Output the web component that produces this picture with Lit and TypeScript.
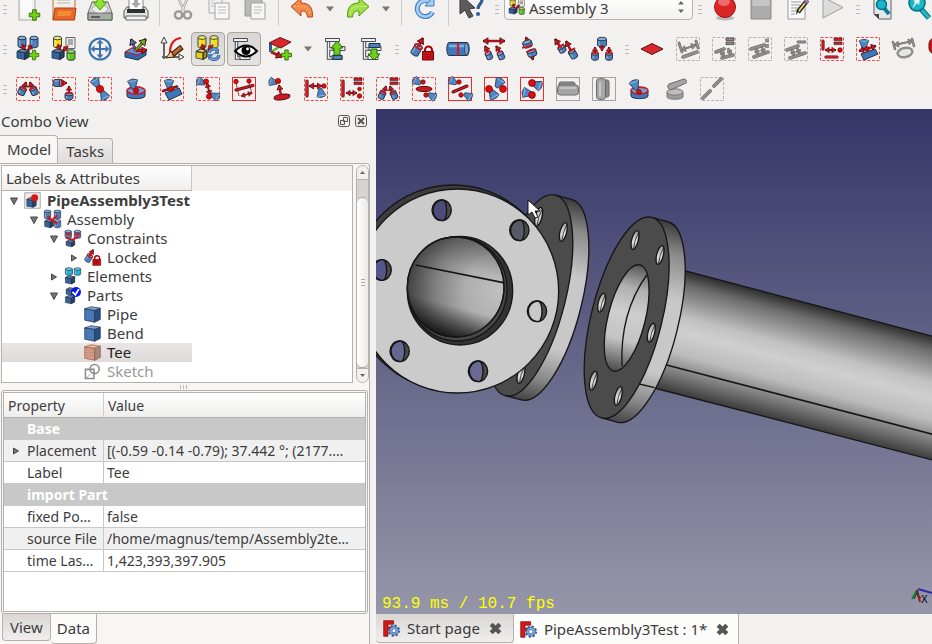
import { LitElement, html, svg, css, nothing } from "lit";
import { customElement, property, state } from "lit/decorators.js";
import { classMap } from "lit/directives/class-map.js";

const INK = "#27313f";
const RED = "#d01820";
const BLUE = "#4a80c0";
const GRAY = "#8e8e8e";

/* ---------- drawing parts shared by the icons (24 x 24 grid) ---------- */

const cyl = (x: number, y: number, r = 0, w = 8, h = 8, fill = BLUE, rim = INK) => svg`
  <g transform="translate(${x} ${y}) rotate(${r})" stroke=${rim} stroke-width=".9">
    <path d="M${-w / 2} ${-h / 2}V${h / 2}A${w / 2} 1.8 0 0 0 ${w / 2} ${h / 2}V${-h / 2}Z" fill=${fill}/>
    <path d="M${-w / 2 + 1.6} ${-h / 2 + 2}V${h / 2 + 0.5}" stroke="#fff" stroke-opacity=".3" stroke-width="1.4"/>
    <ellipse cy=${-h / 2} rx=${w / 2} ry="1.8" fill=${fill}/>
    <ellipse cy=${-h / 2} rx=${w / 2 - 0.6} ry="1.2" fill="#fff" fill-opacity=".35" stroke="none"/>
  </g>`;

const cone = (x: number, y: number, r = 0, s = 1) => svg`
  <g transform="translate(${x} ${y}) rotate(${r}) scale(${s})" stroke="#26374d" stroke-width=".8">
    <path d="M-5-3.500Q0-6.500 5-3.500L1.600 5H-1.600Z" fill="#4f86c4"/>
    <path d="M-4.400-3.500Q0-1.800 4.400-3.500" fill="none" stroke="#9cc0e8"/>
  </g>`;

const box = (x: number, y: number, w = 9, h = 8, fill = "#34639f") => svg`
  <g transform="translate(${x} ${y})" stroke=${INK} stroke-width=".8" stroke-linejoin="round">
    <path d="M0 2.5L${w * 0.65} 3.5V${h + 1.5}L0 ${h}Z" fill=${fill}/>
    <path d="M${w * 0.65} 3.5L${w} 1.5V${h - 1}L${w * 0.65} ${h + 1.5}Z" fill=${fill}/>
    <path d="M${w * 0.65} 3.5L${w} 1.5V${h - 1}L${w * 0.65} ${h + 1.5}Z" fill="#000" fill-opacity=".3"/>
    <path d="M0 2.5L${w * 0.4} 0L${w} 1.5L${w * 0.65} 3.5Z" fill=${fill}/>
    <path d="M0 2.5L${w * 0.4} 0L${w} 1.5L${w * 0.65} 3.5Z" fill="#fff" fill-opacity=".25"/>
  </g>`;

const dot = (x: number, y: number, r = 2.8, fill = "#e00c0c") =>
  svg`<circle cx=${x} cy=${y} r=${r} fill=${fill} stroke="#7c0a0a" stroke-width=".8"/>`;

const bar = (a: number, b: number, c: number, d: number, fill = RED, w = 2.4) => svg`
  <path d="M${a} ${b}L${c} ${d}" stroke=${fill === GRAY ? "#6d6d6d" : "#4d0b0e"} stroke-width=${w + 1.2} stroke-linecap="round"/>
  <path d="M${a} ${b}L${c} ${d}" stroke=${fill} stroke-width=${w} stroke-linecap="round"/>`;

const head = (x: number, y: number, ang: number, fill: string, s: number) =>
  svg`<path transform="translate(${x} ${y}) rotate(${ang}) scale(${s})" d="M0 0L-4.6-3V3Z" fill=${fill}
    stroke=${fill === GRAY ? "#6d6d6d" : "#4d0b0e"} stroke-width=".7"/>`;

const arrow = (a: number, b: number, c: number, d: number, both = false, fill = RED, s = 1) => {
  const t = (Math.atan2(d - b, c - a) * 180) / Math.PI;
  return svg`
    <path d="M${a} ${b}L${c} ${d}" stroke=${fill === GRAY ? "#6d6d6d" : "#6d0b0e"} stroke-width=${2.2 * s}/>
    <path d="M${a} ${b}L${c} ${d}" stroke=${fill} stroke-width=${1.2 * s}/>
    ${head(c, d, t, fill, s)}${both ? head(a, b, t + 180, fill, s) : nothing}`;
};

const frame = (color = "#f04a4a", dash = true) => svg`
  <rect x=".5" y=".5" width="23" height="23" fill="none" stroke=${color} stroke-dasharray=${dash ? "3 1.6" : "none"}/>`;

const equal = (x: number, y: number, fill = RED) => svg`
  <path d="M${x} ${y}h8v2.6h-8zM${x} ${y + 4}h8v2.6h-8z" fill=${fill} stroke="#40282a" stroke-width=".7"/>`;

const plus = (x: number, y: number, s = 1) => svg`
  <path transform="translate(${x} ${y}) scale(${s})" d="M-1.7-5h3.4v3.3H5v3.4H1.7V5h-3.4V1.7H-5v-3.4h3.3z"
    fill="#73d216" stroke="#2f6b06" stroke-width=".9"/>`;

const treeGlyph = svg`
  <g fill="#f2f2f2" stroke="#454b50">
    <path d="M4.500 5v16h5M4.500 12h5" stroke-width="3.400" fill="none"/><path d="M4.500 4v17h5M4.500 12h5" stroke="#f2f2f2" stroke-width="1.400" fill="none"/>
    <path d="M1.500 1.500h14v3h-14z"/><path d="M9 9.500h12v4H9zM8 18.500h10v4H8z"/>
  </g>`;

const icons: Record<string, unknown> = {
  newDoc: svg`<path d="M3 0h16v23H3z" fill="#f1f1f0" stroke="#a9a9a7"/><path d="M5 2h11v16H5z" fill="#fafafa"/>${plus(18.500, 18, 1.050)}`,
  open: svg`<path d="M1 23V0h9l2 2h11v8" fill="#f2efea" stroke="#b2703c"/><path d="M5 3h13M5 6h13" stroke="#b5b5b0"/>
    <path d="M3 11h21l-1.500 12H1z" fill="#e8672c" stroke="#b23a10"/><path d="M6 14h14l-2 5H5z" fill="#f0a432" fill-opacity=".65"/>`,
  save: svg`<path d="M4 5h16l4 11v7H0v-7z" fill="#d6d7d5" stroke="#6a6c69"/><path d="M0 16h24v7H0z" fill="#a9aba8" stroke="#5a5c59"/>
    <ellipse cx="12" cy="12" rx="8" ry="4" fill="#eceded" stroke="#aaa"/><path d="M3 20h9" stroke="#444" stroke-width="1.500"/><path d="M17 20h4" stroke="#6d6"/>
    <path d="M9-2h6v7h4l-7 8-7-8h4z" fill="#8ae234" stroke="#4e9a06"/>`,
  print: svg`<path d="M5 0h14v13H5z" fill="#fff" stroke="#888"/><path d="M10 3h4v3h3l-5 5-5-5h3z" fill="#aaa"/>
    <path d="M3 10h2v4h14v-4h2l3 4v7H0v-7z" fill="#e2e2e0" stroke="#555"/><path d="M3 12h18v4H3z" fill="#2e3436"/><path d="M2 19h20v4H2z" fill="#f5f5f5" stroke="#666"/>`,
  cut: svg`<path d="M6-2l7 16M18-2l-7 16" stroke="#a9a9a9" stroke-width="2.600"/><path d="M6-2l7 16M18-2l-7 16" stroke="#e6e6e6"/>
    <circle cx="7.500" cy="18" r="3.600" fill="none" stroke="#999" stroke-width="2.400"/><circle cx="16.500" cy="18" r="3.600" fill="none" stroke="#999" stroke-width="2.400"/>`,
  copy: svg`<path d="M2-2h13v18H2z" fill="#f2f2f2" stroke="#adadad"/><path d="M8 6h14v16H8z" fill="#f7f7f7" stroke="#a2a2a2"/>
    <path d="M11 10h8M11 13h8M11 16h8M4 3h4M4 6h3M4 9h3" stroke="#b9b9b9"/>`,
  paste: svg`<path d="M2-2h17v21H2z" fill="#b9b9b7" stroke="#999"/><path d="M8 6h14v16H8z" fill="#f6f6f6" stroke="#a2a2a2"/>
    <path d="M11 10h8M11 13h8M11 16h6" stroke="#b9b9b9"/>`,
  undo: svg`<path d="M1 9.500L11 1v5c8 0 12 4 11.500 14h-5c-.5-5-2.500-6-6.500-6v5z" fill="#f08a4b" stroke="#c4401c" stroke-linejoin="round"/>
    <path d="M4 9.500h8c5 0 7.500 3 8 8" fill="none" stroke="#fbc26a" stroke-dasharray="2 1.500"/>`,
  redo: svg`<path d="M23 9.500L13 1v5C5 6 1 10 1.500 20h5c.5-5 2.500-6 6.500-6v5z" fill="#9fe04a" stroke="#4e9a06" stroke-linejoin="round"/>
    <path d="M20 9.500h-8c-5 0-7.500 3-8 8" fill="none" stroke="#e2f56a" stroke-dasharray="2 1.500"/>`,
  refresh: svg`<path d="M19.500 15a8 8 0 1 1-1.500-9" fill="none" stroke="#3f7cc0" stroke-width="5"/>
    <path d="M19.500 15a8 8 0 1 1-1.500-9" fill="none" stroke="#a5cdf2" stroke-width="2.800"/>
    <path d="M21-1v10h-9z" fill="#a5cdf2" stroke="#3f7cc0"/>`,
  whats: svg`<path d="M0-3v20l5-4 4 8 4-2-4-7 6-1z" fill="#5c5c5c" stroke="#333"/><path d="M14 2c1-4 8-4 8 1 0 4-4 4-4 9" fill="none" stroke="#2d5d96" stroke-width="3.200"/>
    <circle cx="18" cy="17" r="2" fill="#2d5d96"/>`,
  record: svg`<ellipse cx="12" cy="21" rx="9" ry="2.500" fill="#b9b9b7"/><circle cx="12" cy="10" r="10.500" fill="#dc2626" stroke="#9c1010"/><ellipse cx="11" cy="5" rx="6" ry="4" fill="#f48a8a" fill-opacity=".7"/>`,
  stop: svg`<path d="M2 0h20v22H2z" fill="#ababab" stroke="#8b8b8b"/><path d="M3.500 0h17v9h-17z" fill="#c6c6c6"/>`,
  macro: svg`<path d="M3 0h17v22H3z" fill="#fafafa" stroke="#999"/><path d="M6 5h10M6 8h9M6 11h8M6 14h5M6 17h4" stroke="#999"/>
    <path d="M22.500 3L13 15" stroke="#222" stroke-width="4.500"/><path d="M20 6L13.500 14.500" stroke="#f0d060" stroke-width="2"/><path d="M22.500 3l-2 2.500" stroke="#a878b0" stroke-width="4"/><path d="M14 14l-3 4 1-6z" fill="#222"/>`,
  play: svg`<path d="M2 0V21L22 10.500Z" fill="#dcdcdc" stroke="#9d9d9d"/>`,
  fit: svg`<path d="M3 0h17v22H8l-5-5z" fill="#e6e8e8" stroke="#5b5f60"/><path d="M3 17h5v5z" fill="#444"/><path d="M13 11l5 6" stroke="#087f95" stroke-width="4"/>
    <circle cx="10.500" cy="7.500" r="5" fill="#19b6c8" stroke="#067184" stroke-width="1.500"/>`,
  zoom: svg`<path d="M14 12l8 9" stroke="#067184" stroke-width="5.500"/><path d="M14 12l8 9" stroke="#22bccc" stroke-width="3"/>
    <circle cx="10" cy="6" r="8" fill="#19b6c8" stroke="#067184" stroke-width="1.600"/><path d="M5 12l3-7-2-1 7-3-1 7-2-2z" fill="#f0f0f0"/>`,

  asmAdd: svg`${cyl(6, 5)}${cyl(18, 5)}${box(1, 12, 12, 9)}${arrow(6, 7, 9, 13, false, RED, 0.900)}${arrow(16, 8, 12, 13, false, RED, 0.900)}${plus(18, 18, 0.950)}`,
  asmPart: svg`${cyl(5.500, 5, 0, 8, 8, "#f0dc20")}<path d="M14 .5h9v11h-9z" fill="#ededed" stroke="#666"/><path d="M16 3h5M16 5h5M16 7h5" stroke="#666"/>
    ${box(0, 12, 12, 9)}${arrow(6, 7, 8, 13, false, RED, 0.900)}${arrow(16, 9, 11, 14, false, RED, 0.900)}${cyl(19, 18, 0, 8, 7, "#60c818")}`,
  move: svg`<circle cx="12" cy="12" r="10.500" fill="none" stroke="#3e72ae" stroke-width="2.200"/>
    <path d="M12 4v16M4 12h16" stroke="#3e72ae" stroke-width="2"/><path d="M12 2.500l3.500 4h-7zM12 21.500l3.500-4h-7zM2.500 12l4-3.500v7zM21.500 12l-4-3.500v7z" fill="#3e72ae"/>`,
  axes: svg`<path d="M1 15l7-4 14 2v5l-8 5L1 20z" fill="#2f68ac" stroke=${INK}/><path d="M1 15l13 3 8-5-14-2z" fill="#5c93d4" stroke="#d01018"/>
    ${arrow(12, 14, 7, 2, false, "#3a78c0", 1.200)}${arrow(11, 14, 22, 2, false, "#58c020", 1.300)}${arrow(12, 14, 23, 13, false, RED, 1.100)}`,
  sketch: svg`<path d="M4 22V3M2 20h20" stroke="#666" stroke-width="2"/><path d="M4 0l3 6H1zM24 20l-5 3v-6z" fill="#eee" stroke="#444"/>
    <path d="M10 16C10 8 13 2 21 1" fill="none" stroke="#e01818" stroke-width="2.200"/><path d="M22 10L12 18" stroke="#402408" stroke-width="5.500"/><path d="M21 10.500l-8 6.500" stroke="#b86830" stroke-width="3"/><path d="M11 14l-5 7 8-1z" fill="#e8c890" stroke="#402408"/>`,
  asmLink: svg`${cyl(6, 5, 0, 8, 9, "#f0dc20")}${cyl(18, 5, 0, 8, 9, "#f0dc20")}${box(0, 12, 11, 9, "#e8d018")}${arrow(6, 7, 8, 13, false, RED, 0.900)}${arrow(17, 8, 12, 13, false, RED, 0.900)}
    <path d="M13 16c1-5 7-5 8-2M23 18c-1 6-8 5-9 2" fill="none" stroke="#2a5c9c" stroke-width="3.200"/><path d="M13 16c1-5 7-5 8-2M23 18c-1 6-8 5-9 2" fill="none" stroke="#86b2e6" stroke-width="1.200"/>
    <path d="M23 11v6h-6zM12 23v-6h6z" fill="#4a80c0"/>`,
  eye: svg`${treeGlyph}<path d="M3 14Q14 3 25 14Q14 25 3 14Z" fill="#fff" stroke="#000" stroke-width="2"/><circle cx="14" cy="13.500" r="4.500" fill="#000"/><circle cx="15.500" cy="12" r="1.400" fill="#fff"/>`,
  plane: svg`<path d="M2.500 6v9" stroke="#2c5a96" stroke-width="3"/><path d="M3 15l8-5" stroke="#58c020" stroke-width="2.400"/>${arrow(3, 15, 14, 20, false, RED, 1.200)}
    <path d="M1 6l11-5.500 11 4.500-10 6z" fill="#d8262c" stroke="#6a1414"/>${plus(18.500, 18)}`,
  up: svg`${treeGlyph}<path d="M9 18.500h9v4H9z" fill="#4a80c0" stroke="#234"/><path d="M13 4l6 7h-3v7h-6v-7H7z" fill="#6cd01c" stroke="#27620a"/>`,
  down: svg`${treeGlyph}<path d="M9 6.500h11v4H9z" fill="#4a80c0" stroke="#234"/><path d="M14 23l6-6h-3v-5h-6v5H8z" fill="#6cd01c" stroke="#27620a"/>`,
  lock: svg`${cyl(6.500, 13, 30, 8, 8)}${arrow(8, 10, 13, 1, false, RED, 1.200)}<ellipse cx="8.500" cy="9.500" rx="4" ry="2" transform="rotate(30 8.500 9.500)" fill="none" stroke=${RED} stroke-width="1.400"/>
    <path d="M15 16v-3a3.500 3.500 0 0 1 7 0v3" fill="none" stroke="#a00" stroke-width="2"/><path d="M12.500 14.500h11v8.500h-11z" fill="#cf1018" stroke="#6c0508"/><path d="M15 17.500h6M15 20h6" stroke="#8a0a0e"/>`,
  coin: svg`<path d="M3 5.500h18a2 6 0 0 1 0 13H3a2 6 0 0 1 0-13z" fill="#3f78ba" stroke=${INK}/><path d="M3 9h18" stroke="#7fb0e6" stroke-width="2.500"/><path d="M12 6v12.500" stroke="#e01818" stroke-width="2.200"/><ellipse cx="20.500" cy="12" rx="2" ry="6" fill="#6ea3de" stroke=${INK} stroke-width=".7"/>`,
  axial: svg`${arrow(1, 4, 23, 4, true, RED, 1.100)}${cyl(7, 18.500, -24, 6, 5)}${cyl(19, 18.500, -24, 6, 5)}${arrow(6, 15, 3, 9)}${arrow(18, 15, 14, 9)}
    <path d="M3 16l5-2M15 16l5-2" stroke=${RED} stroke-width="1.600"/>`,
  coax: svg`${arrow(10, 6, 8, 0)}${arrow(13, 16, 15, 23)}${cyl(9.500, 7, -18, 9, 4)}${cyl(14, 16, -18, 9, 4)}<path d="M4 11l10-3M8 15l10-3" stroke=${RED} stroke-width="1.600"/>`,
  parallel: svg`${cyl(8, 12, -30, 7, 4)}${cyl(19, 17, -30, 7, 6)}${arrow(7, 11, 1, 2, false, RED, 1.100)}${arrow(17, 14, 12, 4, false, RED, 1.100)}<path d="M4 11l6-4M15 15l6-4" stroke=${RED} stroke-width="1.600"/>`,
  multi: svg`${cyl(12, 5, 0, 9, 6)}${arrow(12, 8, 12, 14, false, RED, 0.900)}${cyl(5, 19, 0, 7, 5)}${cyl(19, 19, 0, 7, 5)}${arrow(5, 16, 5, 10, false, RED, 0.900)}${arrow(19, 16, 19, 10, false, RED, 0.900)}<path d="M1 16.500h8M15 16.500h8" stroke=${RED} stroke-width="1.600"/>`,
  diamond: svg`<path d="M1 12l11-5.500 11 5.500-11 5.500z" fill="#d8262c" stroke="#5a1010"/>`,
  gDist: svg`${frame("#b3b3b3")}${arrow(5, 13, 20, 8, true, GRAY)}${bar(3, 6, 6, 15, GRAY, 1.600)}${bar(20, 4, 22, 11, GRAY, 1.600)}${bar(7, 20, 21, 15, GRAY)}`,
  gEq1: svg`${frame("#b3b3b3")}${equal(14, 1, GRAY)}${bar(4, 15, 12, 12, GRAY)}${bar(10, 21, 21, 18, GRAY)}${arrow(9, 13, 12, 20, true, GRAY, 0.800)}${arrow(16, 11, 19, 18, true, GRAY, 0.800)}`,
  gEq2: svg`${frame("#b3b3b3")}<path d="M17 1.500h4v4h-4zM17 7h4v4h-4z" fill=${GRAY}/>${bar(3, 12, 16, 8, GRAY)}${bar(6, 20, 20, 15, GRAY)}${arrow(8, 11, 10, 18, true, GRAY, 0.800)}${arrow(14, 10, 16, 16, true, GRAY, 0.800)}`,
  gEq3: svg`${frame("#b3b3b3")}${bar(14, 5, 21, 5, GRAY, 1.600)}${bar(3, 13, 14, 9, GRAY)}${bar(6, 21, 21, 16, GRAY)}${arrow(8, 12, 10, 19, true, GRAY, 0.800)}${arrow(13, 11, 16, 17, true, GRAY, 0.800)}`,
  rEq: svg`${frame()}${bar(3, 4, 3, 12, RED, 1.800)}${equal(14, 1)}${arrow(5, 13, 16, 13, true, RED, 0.900)}${dot(20, 13, 2.200)}${bar(6, 20, 17, 20, RED, 2)}`,
  planeCone: svg`${frame()}<path d="M5 17l14-5 3 5-14 6z" fill="#3f78ba" stroke=${INK}/>${cone(8, 7, 0, 0.950)}${arrow(3, 14, 20, 9, true, RED, 1)}${dot(11, 12, 2.400)}`,
  gRing: svg`${arrow(2, 8, 21, 4, true, GRAY)}${bar(1, 5, 3, 12, GRAY, 1.400)}${bar(20, 2, 22, 9, GRAY, 1.400)}<ellipse cx="13" cy="15.500" rx="7.500" ry="4.600" transform="rotate(-12 13 15.500)" fill="#e4e4e4" stroke="#8e8e8e" stroke-width="2.400"/>`,
  last: svg`<rect x="1" y="1" width="14" height="16" rx="6" fill="#d01018" stroke="#5a1010"/><path d="M5 6h6v7H5z" fill="#f4b8b8"/>`,

  c1: svg`${frame()}${cyl(6, 14, 25, 7, 5)}${cyl(18, 14, -25, 7, 5)}${arrow(8, 12, 10, 5, false, RED, 1)}${arrow(16, 12, 14, 5, false, RED, 1)}<path d="M4 10l7 3M20 10l-7 3" stroke=${RED} stroke-width="1.500"/>`,
  c2: svg`${frame()}${cyl(6, 6, 90, 7, 6)}${arrow(9, 6, 15, 6, false, RED, 0.900)}${cyl(17, 19, 0, 8, 4)}${arrow(17, 16, 17, 9, false, RED, 0.900)}<path d="M13 16.500h8M9.500 2v8" stroke=${RED} stroke-width="1.500"/>`,
  c3: svg`${frame()}${cone(8, 6, -28, 0.950)}${cone(16, 18, 152, 0.950)}${dot(12, 12, 3.600)}`,
  c4: svg`<path d="M3 14v5c0 3.500 18 3.500 18 0v-5" fill="#3f78ba" stroke=${INK}/><ellipse cx="12" cy="13.500" rx="9" ry="3.600" fill="#6ea3de" stroke=${RED} stroke-width="1.600"/>${cone(9, 7, -8, 1)}${dot(12, 13.500, 2.600)}`,
  c5: svg`${frame()}<path d="M5 16l14-5 3 6-13 6z" fill="#3f78ba" stroke=${INK}/>${cone(9, 7, 0, 0.950)}${bar(3, 14, 17, 9.500, RED, 1.200)}${dot(11, 12, 2.400)}`,
  c6: svg`${frame()}${cone(5, 5, -65, 0.850)}${cone(19, 19, 115, 0.850)}${arrow(11, 6, 14, 18, true, RED, 0.900)}${dot(10, 4.500, 2.600)}${dot(13, 19.500, 2.600)}`,
  c7: svg`${frame("#f02a2a", false)}<path d="M4 6l3 13M17 6l3 11" stroke="#b33"/>${dot(4, 4.500, 2.200)}${dot(17, 4, 2.200)}${bar(4, 13, 21, 8.500, RED, 1.800)}${arrow(9, 19, 20, 16, true, RED, 0.800)}`,
  c8: svg`${cone(5, 5, -78, 0.850)}<ellipse cx="14" cy="20" rx="8" ry="2.800" fill=${RED} stroke="#4d0b0e" transform="rotate(-8 14 20)"/>${arrow(13, 18, 11, 8, false, RED, 1)}${dot(10, 4, 2.600)}`,
  c9: svg`${frame()}${bar(3, 4, 3, 19, RED, 2)}${cone(17, 16, 170, 0.900)}${arrow(5, 9, 18, 9, true, RED, 1)}${dot(20, 9, 2.200)}`,
  c10: svg`${frame()}${bar(3, 4, 3, 19, RED, 2)}${equal(14, 1)}${arrow(6, 16, 17, 16, true, RED, 0.900)}${dot(19.500, 12, 1.800)}${dot(19.500, 19, 2.200)}`,
  c11: svg`${frame()}${equal(14, 1)}${cyl(6, 18, 25, 6, 5)}${cyl(18, 18, -25, 6, 5)}${arrow(8, 16, 10, 9, false, RED, 0.900)}${arrow(16, 16, 14, 9, false, RED, 0.900)}<path d="M4 14l6 3M20 14l-6 3" stroke=${RED} stroke-width="1.400"/>`,
  c12: svg`${frame()}${cone(5, 4.500, -60, 0.850)}${cone(20, 19, 120, 0.850)}<ellipse cx="12" cy="12" rx="8" ry="2.600" fill=${RED} stroke="#4d0b0e"/>${dot(11, 5, 2.200)}${dot(14, 18, 2.200)}`,
  c13: svg`${frame("#f02a2a", false)}${cone(5, 4.500, -60, 0.850)}${cone(20, 19, 120, 0.850)}${bar(5, 15, 19, 9, RED, 1.800)}${dot(11, 5, 2.200)}${dot(13, 18, 2.200)}`,
  c14: svg`${frame("#f02a2a", false)}${cone(15, 6, 30)}${cone(9, 17, 150)}${dot(5, 12, 3.400)}${dot(19, 12, 3.400)}`,
  c15: svg`${frame("#f02a2a", false)}${cone(17, 8, 110)}${cone(7, 16, -80)}${dot(12, 6, 3.400)}${dot(12, 18, 3.400)}`,
  c16: svg`${frame("#a3a3a3", false)}<rect x="3" y="5" width="16" height="10" rx="2" fill="#8a8a8a" stroke="#6a6a6a"/><rect x="1.500" y="8" width="21" height="10" rx="3" fill="#a6a6a6" stroke="#6a6a6a"/><path d="M4 11h16" stroke="#c4c4c4" stroke-width="2"/>`,
  c17: svg`${frame("#a3a3a3", false)}<rect x="9" y="3" width="8" height="17" rx="2" fill="#8a8a8a" stroke="#6a6a6a"/><rect x="4.500" y="1.500" width="9" height="21" rx="3" fill="#a6a6a6" stroke="#6a6a6a"/><path d="M8 5v14" stroke="#c8c8c8" stroke-width="2"/>`,
  c18: svg`<path d="M3 14v5c0 3.500 17 3.500 17 0v-5" fill="#3f78ba" stroke=${INK}/><ellipse cx="11.500" cy="13.500" rx="8.500" ry="3.400" fill="#6ea3de" stroke=${RED} stroke-width="1.600"/>${cone(7, 8, -20, 1)}${dot(11, 15, 2.400)}`,
  c19: svg`<path d="M3 15v5c0 3 16 3 16 0v-5" fill="#9b9b9b" stroke="#7a7a7a"/><ellipse cx="11" cy="15" rx="8" ry="3.200" fill="#bdbdbd" stroke="#7a7a7a"/><path d="M5 7l15-5a2.500 2.500 0 0 1 2 4L9 12a3 3 0 0 1-4-5z" fill="#a4a4a4" stroke="#6a6a6a"/>`,
  c20: svg`${frame("#b3b3b3")}${bar(3, 21, 10, 14, GRAY, 2.600)}${bar(14, 9, 21, 2, GRAY, 2.600)}`,

  freecad: svg`<path d="M1 1h14v5H7v4h6v4H7v9H1z" fill="#d81818" stroke="#7a0808"/>
    <circle cx="15.500" cy="15" r="7.400" fill="none" stroke="#2f5c98" stroke-width="2.400" stroke-dasharray="3 2.810"/>
    <circle cx="15.500" cy="15" r="4.500" fill="none" stroke="#2f5c98" stroke-width="4.600"/><circle cx="15.500" cy="15" r="4.500" fill="none" stroke="#7ba3d8" stroke-width="2.800"/><circle cx="15.500" cy="15" r="2" fill="#fff"/>`,
  tDoc: svg`<path d="M1 1h22v22H1z" fill="#ececec" stroke="#8c8c8c"/>${box(4, 8, 13, 12)}<circle cx="15" cy="8" r="5" fill="#d81818"/>`,
  tAsm: svg`${cyl(5, 5, 0, 9, 9)}${cyl(19, 5, 0, 9, 9)}${box(1, 12, 12, 10)}${cyl(19, 18, 0, 9, 8)}<path d="M5 7l6 6 8-7M12 12l6 6" stroke=${RED} stroke-width="3" fill="none"/>`,
  tCon: svg`${cyl(6, 6, 0, 9, 8)}${cyl(19, 6, 0, 9, 8)}<path d="M2 6h8M15 6h8M3 11l9 3 8-5" stroke=${RED} stroke-width="3" fill="none"/>${box(3, 14, 12, 8)}`,
  tEle: svg`${cyl(7, 5, 0, 10, 7, "#28b0d8")}${cyl(19, 5, 0, 9, 7, "#28b0d8")}${box(2, 11, 13, 10)}`,
  tParts: svg`${box(3, 1, 12, 9)}${box(2, 12, 13, 10)}<circle cx="17" cy="7" r="7" fill="#0a18e8"/><path d="M12 7l4 4 5-8" fill="none" stroke="#fff" stroke-width="2.500"/>`,
  tBox: svg`<path d="M1 4l14 2v17L1 20z" fill="#4579b8" stroke=${INK}/><path d="M15 6l8-3v16l-8 4z" fill="#274f86" stroke=${INK}/><path d="M1 4l9-3 13 2-8 3z" fill="#7aa8de" stroke=${INK}/>`,
  tTee: svg`<path d="M1 4l14 2v17L1 20z" fill="#d99a82" stroke="#a05a48"/><path d="M15 6l8-3v16l-8 4z" fill="#a8887c" stroke="#7d5a50"/><path d="M1 4l9-3 13 2-8 3z" fill="#eab49c" stroke="#a05a48"/><path d="M3 8h11M3 12h11M3 16h11" stroke="#8c8c98" stroke-dasharray="2 2"/>`,
  tSketch: svg`<path d="M2 9h12v13H2z" fill="none" stroke="#8c8c8c" stroke-width="2.200"/><circle cx="15" cy="8.500" r="6.500" fill="none" stroke="#8c8c8c" stroke-width="2.200"/><path d="M2 22l7-6" stroke="#8c8c8c"/>`,
};

const icon = (name: string, size = 24) =>
  html`<svg class="ico" width=${size} height=${size} viewBox="0 0 24 24" fill="none" aria-hidden="true">${icons[name]}</svg>`;

const iconCss = css`
  .ico { display: block; flex: none; overflow: visible; }
  button { font: inherit; color: inherit; background: none; border: 0; padding: 0; margin: 0; }
`;

/* ---------- toolbars ---------- */

const rows: string[][] = [
  ["#", "newDoc", "open", "save", "print", "|", "cut", "copy", "paste", "|", "undo", "v", "redo", "v", "|", "refresh", "|", "whats",
    "##", "select", "##", "record", "stop", "macro", "play", "##", "fit", "zoom"],
  ["#", "asmAdd", "asmPart", "move", "axes", "sketch", "*asmLink", "*eye", "plane", "v", "up", "down", "##", "lock", "coin", "axial",
    "coax", "parallel", "multi", "##", "diamond", "gDist", "gEq1", "gEq2", "gEq3", "rEq", "planeCone", "gRing", "last"],
  ["#", ...Array.from({ length: 20 }, (_, i) => `c${i + 1}`)],
];

@customElement("tool-bars")
export class ToolBars extends LitElement {
  static styles = [iconCss, css`
    :host { display: block; overflow: hidden; background: #f2f1f0; }
    .row { display: flex; align-items: center; height: 40px; overflow: hidden; }
    .row.first { height: 29px; align-items: flex-end; padding-bottom: 3px; box-sizing: border-box; }
    .tool { width: 34px; height: 34px; margin: 0 1px; flex: none; display: grid; place-items: center; box-sizing: border-box; border: 1px solid transparent; border-radius: 4px; }
    .tool.on { border-color: #aaa49d; background: linear-gradient(#d8d5d2, #e6e4e2); }
    .grip { width: 14px; height: 34px; flex: none; display: grid; place-items: center; }
    .grip.lead { width: 10px; }
    .grip::before { content: ""; width: 4px; height: 9px; background: repeating-linear-gradient(#bdbab6 0 1px, transparent 1px 4px); }
    .sep { width: 1px; height: 34px; margin: 0 5px; flex: none; background: #cfccc8; }
    .more { width: 20px; height: 34px; flex: none; display: grid; place-items: center; }
    .more svg { display: block; }
    .combo { display: flex; align-items: center; gap: 4px; width: 189px; height: 26px; box-sizing: border-box; margin-bottom: 6px; padding: 0 8px 0 4px; flex: none; border: 1px solid #b5b1ac; border-radius: 4px; background: linear-gradient(#fff, #f3f2f1); }
    select { flex: 1; min-width: 0; height: 24px; appearance: none; border: 0; padding: 2px 0 0; background: none; color: #3c3c3c; font: 15px/20px "Noto Sans", sans-serif; }
  `];

  private item(k: string) {
    if (k === "#") return html`<span class="grip lead"></span>`;
    if (k === "##") return html`<span class="grip"></span>`;
    if (k === "|") return html`<span class="sep"></span>`;
    if (k === "v") return html`<button class="more" aria-label="More"><svg width="8" height="6" viewBox="0 0 8 6"><path d="M0 .5H8L4 5.500Z" fill="#777"/></svg></button>`;
    if (k === "select") return html`<label class="combo">${icon("asmPart", 16)}
      <select aria-label="Workbench"><option>Assembly 3</option></select>
      <svg width="6" height="12" viewBox="0 0 6 12" aria-hidden="true"><path d="M0 3.500L3 0l3 3.500zM0 8.500L3 12l3-3.500z" fill="#666"/></svg></label>`;
    const on = k.startsWith("*");
    const name = on ? k.slice(1) : k;
    return html`<button class=${classMap({ tool: true, on })} aria-label=${name}>${icon(name)}</button>`;
  }

  render() {
    return rows.map((r, i) => html`<div class=${classMap({ row: true, first: i === 0 })}>${r.map((k) => this.item(k))}</div>`);
  }
}

/* ---------- model tree and properties ---------- */

interface Node { level: number; label: string; icon: string; open?: boolean; leaf?: boolean; kind?: string }

const nodes: Node[] = [
  { level: 0, label: "PipeAssembly3Test", icon: "tDoc", open: true, kind: "bold" },
  { level: 1, label: "Assembly", icon: "tAsm", open: true },
  { level: 2, label: "Constraints", icon: "tCon", open: true },
  { level: 3, label: "Locked", icon: "lock" },
  { level: 2, label: "Elements", icon: "tEle" },
  { level: 2, label: "Parts", icon: "tParts", open: true },
  { level: 3, label: "Pipe", icon: "tBox", leaf: true },
  { level: 3, label: "Bend", icon: "tBox", leaf: true },
  { level: 3, label: "Tee", icon: "tTee", leaf: true },
  { level: 3, label: "Sketch", icon: "tSketch", leaf: true, kind: "dim" },
];

const props: { group?: string; name?: string; value?: string; expand?: boolean; alt?: boolean }[] = [
  { group: "Base" },
  { name: "Placement", value: "[(-0.59 -0.14 -0.79); 37.442 °; (2177.…", expand: true, alt: true },
  { name: "Label", value: "Tee" },
  { group: "import Part" },
  { name: "fixed Po…", value: "false" },
  { name: "source File", value: "/home/magnus/temp/Assembly2te…", alt: true },
  { name: "time Las…", value: "1,423,393,397.905" },
];

const triangle = (open?: boolean) => html`<svg class="tri" width="8" height="8" viewBox="0 0 8 8" aria-hidden="true">
  <path d=${open ? "M.5 1H7.500L4 7.500Z" : "M1.500 1V7L6.500 4Z"} fill="#777" stroke="#444"/></svg>`;

@customElement("combo-view")
export class ComboView extends LitElement {
  @property({ attribute: false }) items: Node[] = nodes;
  @state() private picked = "Tee";

  static styles = [iconCss, css`
    :host { display: flex; flex-direction: column; min-height: 0; color: #3c3c3c; background: #f2f1f0; font: 15px/19px "Noto Sans", sans-serif; }
    .title { display: flex; align-items: center; gap: 5px; height: 26px; box-sizing: border-box; padding: 0 9px 2px 1px; flex: none; }
    .title span { flex: 1; }
    .title svg { display: block; }
    .tabs { display: flex; align-items: flex-end; height: 28px; flex: none; }
    .tab { height: 25px; padding: 0 8px; border: 1px solid #b5b1ac; border-bottom: 0; border-left: 0; border-radius: 0 4px 0 0; background: linear-gradient(#f0efee, #dedbd8); }
    .tab.on { height: 28px; padding: 0 6px 0 7px; background: #f8f7f6; }
    .pane { display: flex; flex-direction: column; flex: 1; min-height: 0; margin-right: 6px; border: 1px solid #b5b1ac; border-left: 0; border-bottom: 0; border-radius: 0 4px 0 0; background: #f7f6f5; }
    .upper { display: flex; gap: 3px; flex: none; height: 219px; padding: 1px 0 0 1px; box-sizing: border-box; }
    .tree { flex: 1; border: 1px solid #b5b1ac; background: #fff; overflow: hidden; }
    .heads { display: flex; height: 25px; background: #f2f1f0; }
    .head { width: 190px; box-sizing: border-box; padding: 3px 4px; border-right: 1px solid #c9c6c2; border-bottom: 1px solid #b5b1ac; background: linear-gradient(#fff, #f0efee); }
    ul { list-style: none; margin: 0; padding: 0; width: 190px; }
    li { display: flex; align-items: center; height: 19px; gap: 6px; white-space: nowrap; box-sizing: border-box; }
    .l0 { padding-left: 8px; } .l1 { padding-left: 28px; } .l2 { padding-left: 48px; } .l3 { padding-left: 68px; }
    .tri { display: block; flex: none; }
    .blank { width: 8px; flex: none; }
    .bold { font-weight: 700; }
    .dim { color: #989898; }
    .selected { background: linear-gradient(#e8e6e5, #dedbd9); color: #222; }
    .scroll { display: flex; flex-direction: column; width: 13px; flex: none; box-sizing: border-box; border: 1px solid #b5b1ac; border-radius: 7px; background: #d6d3d0; overflow: hidden; }
    .cap { display: grid; place-items: center; height: 13px; flex: none; background: #f2f1f0; border: 0 solid #b5b1ac; border-bottom-width: 1px; }
    .cap.end { border-width: 1px 0 0; }
    .gap { height: 17px; flex: none; }
    .thumb { flex: 1; display: grid; place-items: center; border: 0 solid #aaa6a1; border-width: 1px 0; border-radius: 6px; background: linear-gradient(90deg, #fff, #eceae8); }
    .thumb::before { content: ""; width: 4px; height: 7px; background: repeating-linear-gradient(#aaa 0 1px, transparent 1px 3px); }
    .split { height: 7px; flex: none; display: grid; place-items: center; }
    .split::before { content: ""; width: 9px; height: 4px; background: repeating-linear-gradient(90deg, #bbb 0 1px, transparent 1px 3px); }
    .props { flex: 1; min-height: 0; margin: 0 1px; padding: 1px; border: 1px solid #b5b1ac; border-radius: 3px; }
    .sheet { height: 100%; box-sizing: border-box; border: 1px solid #b5b1ac; background: #fff; overflow: hidden; }
    table { width: 100%; border-collapse: separate; border-spacing: 0; table-layout: fixed; font-size: 14px; }
    th, td { padding: 0; font-weight: 400; text-align: left; white-space: nowrap; overflow: hidden; box-sizing: border-box; }
    thead th { height: 25px; padding-left: 4px; border-bottom: 1px solid #b5b1ac; background: linear-gradient(#fff, #efeeed); }
    .c1 { width: 99px; }
    thead th + th { border-left: 1px solid #d0cdca; }
    tbody td, tbody th { height: 22px; border-bottom: 1px solid #c8c8c8; }
    tbody th.group { padding-left: 23px; background: #c8c8c8; color: #fff; font-weight: 700; }
    .name { display: flex; align-items: center; gap: 7px; padding-left: 8px; }
    td { padding-left: 3px; border-left: 1px solid #c8c8c8; }
    .alt { background: #f0f0f0; }
    .foot { display: flex; align-items: flex-start; height: 30px; padding-left: 2px; flex: none; }
    .ftab { height: 27px; padding: 0 7px; border: 1px solid #b5b1ac; border-top: 0; border-radius: 0 0 4px 4px; background: linear-gradient(#d9d6d3, #f0efee); }
    .ftab.on { height: 30px; padding: 0 6px; background: #fbfbfa; border-left: 0; }
    .body { display: flex; flex-direction: column; flex: 1; min-height: 0; }
  `];

  render() {
    return html`
      <div class="title"><span>Combo View</span>
        <svg width="12" height="12" viewBox="0 0 12 12" fill="none" stroke="#555"><rect x=".5" y=".5" width="11" height="11" rx="2"/><path d="M5.500 2.500h4v4h-4zM2.500 5.500h4v4h-4z"/></svg>
        <svg width="12" height="12" viewBox="0 0 12 12" fill="none" stroke="#555"><rect x=".5" y=".5" width="11" height="11" rx="2"/><path d="M3 3l6 6M9 3l-6 6" stroke-width="2"/></svg>
      </div>
      <div class="tabs" role="tablist"><button class="tab on" role="tab">Model</button><button class="tab" role="tab">Tasks</button></div>
      <div class="pane">
        <div class="upper">
          <div class="tree">
            <div class="heads"><div class="head">Labels &amp; Attributes</div></div>
            <ul role="tree">
              ${this.items.map((n) => html`<li role="treeitem" @click=${() => (this.picked = n.label)}
                class=${classMap({ [`l${n.level}`]: true, bold: n.kind === "bold", dim: n.kind === "dim", selected: n.label === this.picked })}>
                ${n.leaf ? html`<span class="blank"></span>` : triangle(n.open)}${icon(n.icon, 17)}<span>${n.label}</span></li>`)}
            </ul>
          </div>
          <div class="scroll" aria-hidden="true">
            <span class="cap"><svg width="5" height="3" viewBox="0 0 5 3"><path d="M0 3L2.500 0 5 3z" fill="#666"/></svg></span>
            <span class="gap"></span><span class="thumb"></span>
            <span class="cap end"><svg width="5" height="3" viewBox="0 0 5 3"><path d="M0 0L2.500 3 5 0z" fill="#666"/></svg></span>
          </div>
        </div>
        <div class="split"></div>
        <div class="body">
          <div class="props"><div class="sheet"><table>
            <thead><tr><th class="c1">Property</th><th>Value</th></tr></thead>
            <tbody>${props.map((p) => p.group
              ? html`<tr><th class="group" colspan="2">${p.group}</th></tr>`
              : html`<tr class=${p.alt ? "alt" : ""}><th><div class="name">${p.expand ? triangle() : html`<span class="blank"></span>`}<span>${p.name}</span></div></th><td>${p.value}</td></tr>`)}
            </tbody></table></div></div>
          <div class="foot" role="tablist"><button class="ftab" role="tab">View</button><button class="ftab on" role="tab">Data</button></div>
        </div>
      </div>`;
  }
}

/* ---------- 3D view ---------- */

const tiltedFlange = (x: number, y: number) => svg`
  <g transform="translate(${x} ${y}) rotate(14)">
    <path d="M0-310L50-309A106 310 0 0 1 50 311L0 310Z" fill="url(#rim)"/>
    <ellipse rx="106" ry="310" fill="#4b4b4b"/>
  </g>`;

const slot = (x: number, y: number) => svg`
  <g transform="translate(${x} ${y}) rotate(14)">
    <ellipse rx="10" ry="29" fill="url(#slot)"/>
    <path d="M5-24Q-2 0 2 26" fill="none" stroke-width="2"/>
  </g>`;

const bolt = (x: number, y: number, fill: string) => svg`
  <ellipse cx=${x} cy=${y} rx="29" ry="31" fill="#4a4a4a"/>
  <path d="M${x + 3} ${y - 31}A29 31 0 1 0 ${x + 3} ${y + 31}A12 31 0 0 0 ${x + 3} ${y - 31}Z" fill=${fill}/>`;

@customElement("model-view")
export class ModelView extends LitElement {
  static styles = [iconCss, css`
    :host { display: flex; flex-direction: column; min-width: 0; font: 15px/19px "Noto Sans", sans-serif; color: #3c3c3c; }
    .view { position: relative; flex: 1; min-height: 0; overflow: hidden; background: linear-gradient(#353568, #9696aa); }
    .scene { display: block; width: 100%; height: 100%; }
    .fps { position: absolute; left: 6px; bottom: 0; font: 16px/20px "Liberation Mono", monospace; color: #ffff00; white-space: pre; }
    .axis { position: absolute; right: 0; bottom: 8px; }
    .axis text { font: 10px "Liberation Sans", sans-serif; }
    .docs { display: flex; height: 30px; flex: none; background: #f2f1f0; }
    .doc { display: flex; align-items: center; gap: 7px; height: 29px; padding: 0 11px 0 7px; border: 1px solid #b5b1ac; border-width: 0 1px 1px 0; border-radius: 0 0 4px 4px; background: linear-gradient(#d9d6d3, #f0efee); }
    .doc.on { height: 30px; padding: 0 9px 0 6px; border-width: 0 1px 0 0; border-radius: 0; background: #fcfcfb; }
    .close { margin-left: 2px; display: block; }
    .label { white-space: nowrap; }
  `];

  private doc(label: string, on = false) {
    return html`<button class=${classMap({ doc: true, on })}>${icon("freecad", 17)}<span class="label">${label}</span>
      <svg class="close" width="13" height="13" viewBox="0 0 12 12" aria-hidden="true"><path d="M2 2l8 8M10 2l-8 8" stroke="#555" stroke-width="4"/></svg></button>`;
  }

  render() {
    return html`
      <div class="view">
        <svg class="scene" role="img" aria-label="Pipe assembly">
          <defs>
            <linearGradient id="pipe" gradientUnits="userSpaceOnUse" x1="930" y1="303" x2="838" y2="653">
              <stop offset="0" stop-color="#2c2c2c"/><stop offset=".12" stop-color="#6c6c6c"/><stop offset=".38" stop-color="#c2c2c2"/>
              <stop offset=".5" stop-color="#cfcfcf"/><stop offset=".68" stop-color="#bcbcbc"/><stop offset=".88" stop-color="#6e6e6e"/><stop offset="1" stop-color="#3c3c3c"/>
            </linearGradient>
            <linearGradient id="rim" x1="0" y1="0" x2="0" y2="1">
              <stop offset="0" stop-color="#3a3a3a"/><stop offset=".14" stop-color="#888"/><stop offset=".36" stop-color="#c8c8c8"/>
              <stop offset=".72" stop-color="#c8c8c8"/><stop offset=".88" stop-color="#888"/><stop offset="1" stop-color="#444"/>
            </linearGradient>
            <linearGradient id="bore" x1="0" y1="0" x2="0" y2="1">
              <stop offset="0" stop-color="#555"/><stop offset=".22" stop-color="#b0b0b0"/><stop offset=".45" stop-color="#cecece"/><stop offset=".7" stop-color="#c4c4c4"/><stop offset="1" stop-color="#4a4a4a"/>
            </linearGradient>
            <radialGradient id="cup" cx=".95" cy=".55" r="1">
              <stop offset="0" stop-color="#c0c0c0"/><stop offset=".35" stop-color="#aeaeae"/><stop offset=".65" stop-color="#828282"/><stop offset=".9" stop-color="#4c4c4c"/><stop offset="1" stop-color="#383838"/>
            </radialGradient>
            <linearGradient id="shade" x1=".6" y1="0" x2=".35" y2="1">
              <stop offset="0" stop-color="#000" stop-opacity=".3"/><stop offset=".3" stop-color="#000" stop-opacity="0"/><stop offset=".68" stop-color="#000" stop-opacity="0"/><stop offset="1" stop-color="#000" stop-opacity=".85"/>
            </linearGradient>
            <linearGradient id="slot" x1="0" y1="0" x2="0" y2="1"><stop offset="0" stop-color="#999"/><stop offset=".6" stop-color="#e2e2e2"/><stop offset="1" stop-color="#aaa"/></linearGradient>
          </defs>
          <g transform="translate(0 61) scale(.33333)" stroke="#161616" stroke-width="4" stroke-linejoin="round">
            <path d="M900 295L2400 692V1059L800 645Z" fill="url(#pipe)"/>
            <path d="M860 582L2400 983" fill="none" stroke-width="5"/>
            ${tiltedFlange(752, 443)}
            <path d="M790 642L836 653" fill="none"/>
            <ellipse transform="translate(752 444) rotate(14)" rx="56" ry="164" fill="url(#bore)"/>
            <path d="M812 315Q731 430 738 588" fill="none"/>
            ${slot(777, 210)}${slot(852, 255)}${slot(677, 398)}${slot(826, 488)}${slot(652, 632)}${slot(727, 678)}
            ${tiltedFlange(463, 376)}
            ${slot(562, 186)}${slot(488, 140)}${slot(435, 612)}
            <ellipse cx="232" cy="354" rx="306" ry="309" fill="#3d3d3d"/>
            <ellipse cx="244" cy="363" rx="304" ry="306" fill="#cbcbcb"/>
            <ellipse cx="252" cy="362" rx="158" ry="163" fill="#333"/>
            <ellipse cx="244" cy="357" rx="149" ry="156" fill="#484848"/>
            <ellipse cx="239" cy="351" rx="145" ry="150" fill="url(#cup)"/>
            <ellipse cx="239" cy="351" rx="145" ry="150" fill="url(#shade)"/>
            <path d="M119 285L382 338" fill="none" stroke-width="5"/>
            ${bolt(197, 121, "#4c4c7c")}${bolt(430, 181, "#5a5a66")}${bolt(17, 300, "#56568a")}${bolt(483, 424, "#c8c8c8")}${bolt(71, 544, "#666692")}${bolt(306, 604, "#6a6a94")}
          </g>
          <path d="M152 91v15l4-3 3 6 3-1-3-6h5z" fill="#fff" stroke="#111"/>
        </svg>
        <div class="fps">93.9 ms / 10.7 fps</div>
        <svg class="axis" width="22" height="20" viewBox="0 0 22 20" fill="none" stroke-width="2" aria-hidden="true">
          <path d="M7 4L2 13" stroke="#0a8a2a"/><path d="M8 3L22 7" stroke="#2a2aa8"/><path d="M7 4l3 12" stroke="#a01a1a"/>
          <path d="M8 5l-4 8M6 7l5 5" stroke="#222" stroke-width="1"/><text x="11" y="17" fill="#000">X</text>
        </svg>
      </div>
      <div class="docs">${this.doc("Start page")}${this.doc("PipeAssembly3Test : 1*", true)}</div>`;
  }
}

@customElement("app-root")
export class AppRoot extends LitElement {
  static styles = css`
    :host { display: flex; flex-direction: column; height: 100vh; min-height: 560px; overflow: hidden; background: #f2f1f0; }
    tool-bars { flex: none; }
    .main { flex: 1; min-height: 0; display: grid; grid-template-columns: 376px minmax(0, 1fr); grid-template-rows: minmax(0, 1fr); }
  `;

  render() {
    return html`<tool-bars></tool-bars><div class="main"><combo-view></combo-view><model-view></model-view></div>`;
  }
}
